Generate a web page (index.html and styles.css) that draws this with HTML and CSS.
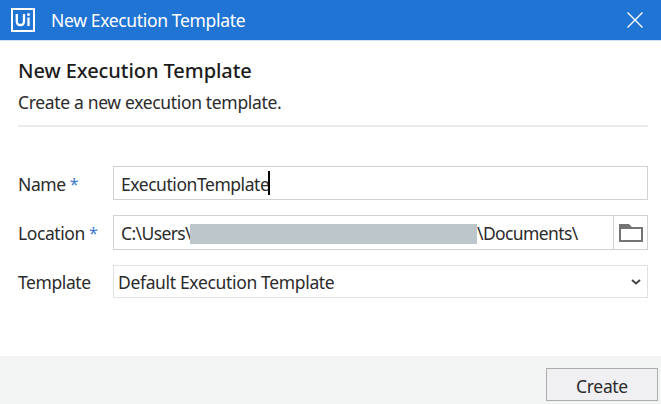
FILE: index.html
```html
<!DOCTYPE html>
<html lang="en">
<head>
<meta charset="utf-8">
<title>New Execution Template</title>
<link rel="stylesheet" href="styles.css">
</head>
<body>
<div class="dialog">
  <header class="titlebar">
    <svg class="logo" width="24" height="24" viewBox="0 0 24 24" fill="none" stroke="#fff">
      <rect x="1" y="1" width="22" height="22" stroke-width="2"/>
      <path d="M5.800 6v7.200c0 2.600 1.300 3.800 3.600 3.800s3.600-1.200 3.600-3.800V6M17.500 9.500v8.500" stroke-width="2.300"/>
      <circle cx="17.500" cy="6.600" r="1.500" fill="#fff" stroke="none"/>
    </svg>
    <span class="caption">New Execution Template</span>
    <svg class="close" width="16" height="16" viewBox="0 0 16 16" stroke="#fff" stroke-width="1.400"><path d="M.5.5l15 15M15.500.5l-15 15"/></svg>
  </header>
  <main class="content">
    <h1 class="heading">New Execution Template</h1>
    <p class="subtitle">Create a new execution template.</p>
    <form class="form">
      <label class="label">Name <span class="star">*</span></label>
      <div class="field"><span class="name-value">ExecutionTemplate</span><span class="caret"></span></div>
      <label class="label">Location <span class="star">*</span></label>
      <div class="field location"><span class="users">C:\Users\</span><span class="redacted"></span><span class="documents">\Documents\</span>
        <span class="browse"><svg width="24" height="18" viewBox="0 0 24 18"><path d="M0 0h10l3 3h11v15H0z" fill="#747474"/><path d="M2 5h20v11H2z" fill="#fff"/></svg></span>
      </div>
      <label class="label">Template</label>
      <div class="field select"><span class="select-value">Default Execution Template</span>
        <svg class="chevron" width="10" height="6" viewBox="0 0 10 6" fill="none" stroke="#444" stroke-width="2"><path d="M1 1l4 3.500 4-3.500"/></svg>
      </div>
    </form>
  </main>
  <footer class="footer"><button class="create">Create</button></footer>
</div>
</body>
</html>
```
FILE: styles.css
```css
* { box-sizing: border-box; }
body {
  margin: 0;
  font: 17.5px/24px "Noto Sans", "Open Sans", sans-serif;
  letter-spacing: -.34px;
  color: #2b2b2b;
  background: #fff;
}
.dialog { display: flex; flex-direction: column; width: 661px; height: 404px; overflow: hidden; white-space: nowrap; }
.titlebar { display: flex; align-items: center; height: 40px; padding: 0 18px 0 11px; background: #1f74d4; color: #fff; flex: none; }
.caption { margin-left: 16px; }
.close { margin-left: auto; }
.content { flex: 1; padding: 17px 13px 0 18px; border-top: 1px solid #cfe1f6; }
.heading { margin: 0; font-size: 20px; line-height: 26px; font-weight: 500; letter-spacing: -.06px; color: #1c1c1c; }
.subtitle { margin: 0; padding: 6px 0 11px; border-bottom: 2px solid #ebebeb; }
.form { display: grid; grid-template-columns: 95px 535px; grid-template-rows: 34px 35px 33px; row-gap: 15px; margin-top: 39px; }
.label { align-self: center; padding-top: 1px; letter-spacing: -.42px; }
.star { color: #3c78cd; font-size: 16px; line-height: 16px; vertical-align: 1px; }
.field { display: flex; align-items: center; padding: 2px 0 0 7px; border: 1px solid #d2d2d2; }
.name-value { letter-spacing: -.45px; }
.caret { width: 2px; height: 24px; margin-left: -1px; margin-top: -3px; background: #000; }
.location { align-items: stretch; padding: 0 0 0 7px; line-height: 35px; }
.users { width: 69px; letter-spacing: -.6px; }
.redacted { position: relative; width: 287px; height: 20px; margin-top: 8px; background: #bdc7cb; }
.documents { width: 103px; letter-spacing: -.6px; }
.browse { display: flex; align-items: center; justify-content: center; width: 34px; margin-left: auto; border-left: 1px solid #d2d2d2; }
.select { padding: 1px 6px 0 4px; border-color: #e1e1e1; }
.chevron { margin-left: auto; }
.footer { display: flex; justify-content: flex-end; height: 48px; padding: 12px 3px 0 0; background: #f3f5f5; flex: none; }
.create { width: 112px; height: 33px; padding: 2px 0 0; border: 1px solid #adadad; background: #f0f0f2; font: inherit; letter-spacing: inherit; color: inherit; }
```
